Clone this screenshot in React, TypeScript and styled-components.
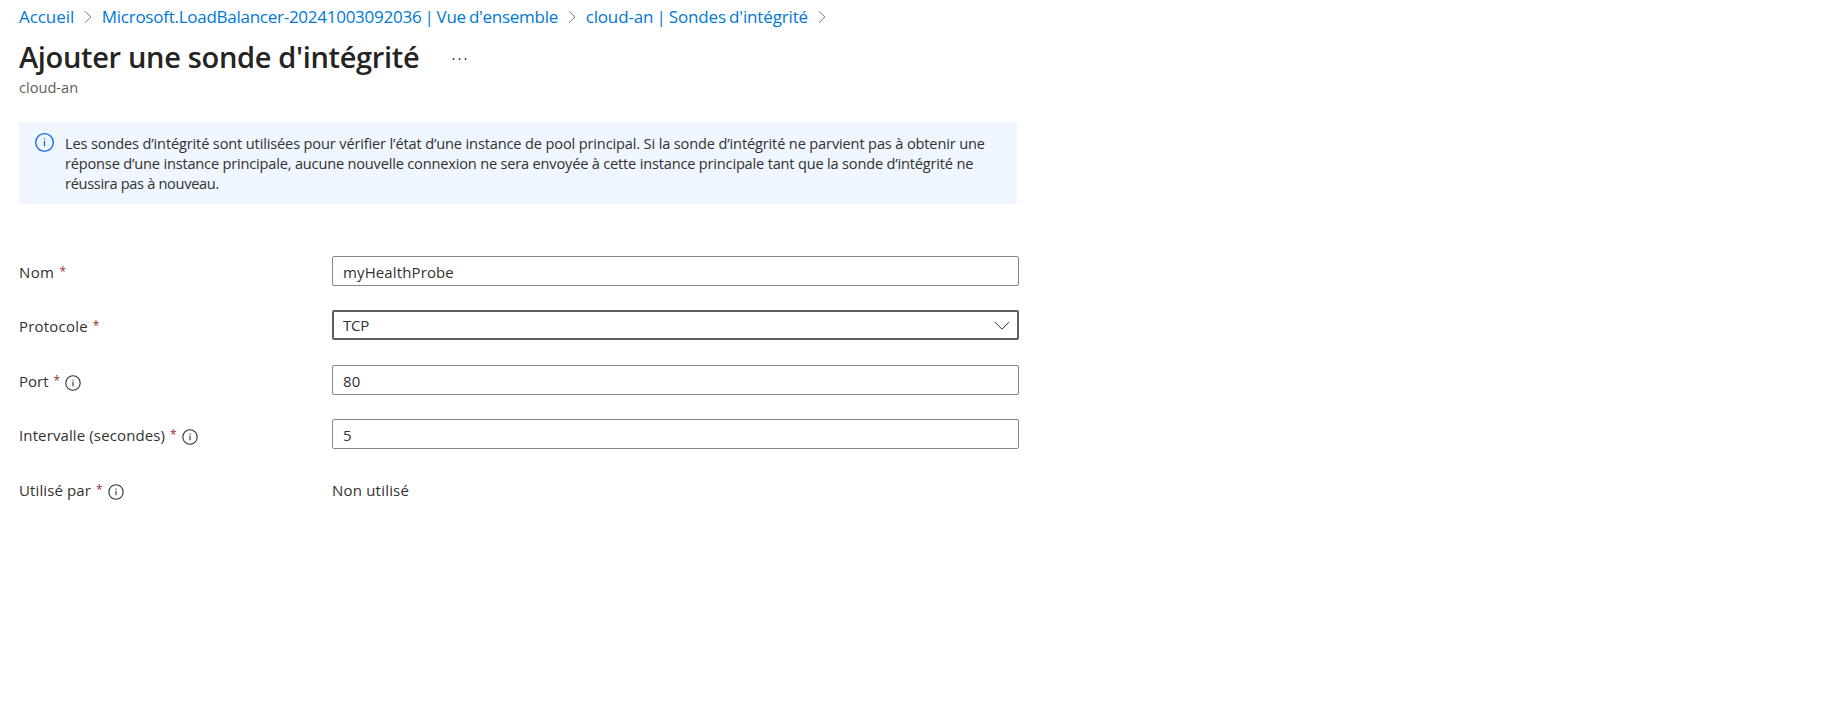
import React from "react";
import styled, { createGlobalStyle } from "styled-components";

const GlobalStyle = createGlobalStyle`
  *, *::before, *::after { box-sizing: border-box; }
  body {
    margin: 0;
    background: #fff;
    color: #323130;
    font-family: "Segoe UI", "Open Sans", "Noto Sans", sans-serif;
  }
`;

const Page = styled.main`
  min-height: 705px;
  padding: 4px 19px 0;
`;

const Breadcrumb = styled.nav`
  display: flex;
  align-items: center;
  height: 26px;
`;

const Crumb = styled.a<{ $spacing: number }>`
  align-self: flex-start;
  color: #0078d4;
  font-size: 17px;
  line-height: 25px;
  letter-spacing: ${(p) => p.$spacing}px;
  word-spacing: -1.1px;
  text-decoration: none;
  white-space: nowrap;
`;

const Separator = styled.svg`
  flex: none;
  width: 8px;
  height: 14px;
  margin: 0 9.8px;
  fill: none;
  stroke: #7a7876;
`;

const TitleRow = styled.header`
  display: flex;
  align-items: center;
  height: 42px;
  margin-top: 6px;
`;

const Title = styled.h1`
  margin: 0;
  color: #252423;
  font-size: 29px;
  font-weight: 600;
  line-height: 42px;
  letter-spacing: -0.33px;
  white-space: nowrap;
`;

const More = styled.svg`
  width: 16px;
  height: 4px;
  margin: 4px 0 0 33px;
  fill: #323130;
`;

const Subtitle = styled.p`
  margin: -1px 0 0;
  color: #605e5c;
  font-size: 14.6px;
  line-height: 20px;
`;

const Notice = styled.section`
  display: flex;
  width: 998px;
  height: 82px;
  margin-top: 25px;
  padding: 11px 16px;
  background: #eff6ff;
`;

const NoticeText = styled.p`
  margin: 0 0 0 11px;
  font-size: 14.6px;
  line-height: 20px;
`;

const NoticeLine = styled.span<{ $spacing: number }>`
  display: block;
  letter-spacing: ${(p) => p.$spacing}px;
  white-space: nowrap;
`;

const Form = styled.form`
  display: grid;
  grid-template-columns: 313px 687px;
  grid-template-rows: 54px 55px 54px 55px 30px;
  margin-top: 52px;
`;

const Label = styled.label`
  display: flex;
  height: 32px;
  align-items: center;
  font-size: 15px;
  line-height: 32px;
  white-space: nowrap;
`;

const LabelText = styled.span<{ $spacing: number }>`
  letter-spacing: ${(p) => p.$spacing}px;
`;

const Required = styled.span`
  margin: 0 0 0 5px;
  color: #a4262c;
  font-size: 12px;
`;

const Input = styled.input`
  width: 100%;
  height: 30px;
  padding: 1px 10px 0;
  border: 1px solid #8a8886;
  border-radius: 2px;
  outline: none;
  color: #323130;
  font: 15px "Segoe UI", "Open Sans", "Noto Sans", sans-serif;
  letter-spacing: 0.12px;
`;

const Select = styled.div`
  display: flex;
  align-items: center;
  justify-content: space-between;
  height: 30px;
  padding: 0 7px 0 9px;
  border: 2px solid #605e5c;
  border-radius: 2px;
  font-size: 15px;
  letter-spacing: -0.2px;
`;

const Chevron = styled.svg`
  width: 16px;
  height: 10px;
  margin-top: 2px;
  fill: none;
  stroke: #323130;
`;

const Value = styled.output`
  height: 32px;
  font-size: 15px;
  line-height: 32px;
  letter-spacing: 0.2px;
`;

const Info = styled.svg<{ $size: number; $color: string }>`
  flex: none;
  width: ${(p) => p.$size}px;
  height: ${(p) => p.$size}px;
  color: ${(p) => p.$color};
  fill: none;
  stroke: currentColor;
`;

const HintSlot = styled.span`
  display: flex;
  margin: 3px 0 0 5px;
`;

function Next() {
  return (
    <Separator viewBox="0 0 8 14">
      <path d="M1 1.2 6.8 7 1 12.8" />
    </Separator>
  );
}

function Hint() {
  return (
    <HintSlot>
      <Info $size={16} $color="#323130" viewBox="0 0 16 16">
        <circle cx="8" cy="8" r="7.2" strokeWidth="1.1" />
        <path d="M8 6.8v4.4M8 4.6v1.2" strokeWidth="1.1" />
      </Info>
    </HintSlot>
  );
}

function FieldLabel({ text, spacing = 0, hint = false }: { text: string; spacing?: number; hint?: boolean }) {
  return (
    <Label>
      <LabelText $spacing={spacing}>{text}</LabelText>
      <Required>*</Required>
      {hint && <Hint />}
    </Label>
  );
}

export default function App() {
  return (
    <Page>
      <GlobalStyle />
      <Breadcrumb>
        <Crumb $spacing={-0.06}>Accueil</Crumb>
        <Next />
        <Crumb $spacing={-0.26}>Microsoft.LoadBalancer-20241003092036 | Vue d'ensemble</Crumb>
        <Next />
        <Crumb $spacing={-0.15}>cloud-an | Sondes d'intégrité</Crumb>
        <Next />
      </Breadcrumb>
      <TitleRow>
        <Title>Ajouter une sonde d'intégrité</Title>
        <More viewBox="0 0 16 4">
          <circle cx="1.5" cy="2" r="0.9" />
          <circle cx="7.5" cy="2" r="0.9" />
          <circle cx="13.5" cy="2" r="0.9" />
        </More>
      </TitleRow>
      <Subtitle>cloud-an</Subtitle>
      <Notice>
        <Info $size={19} $color="#1267e3" viewBox="0 0 19 19">
          <circle cx="9.5" cy="9.5" r="8.8" strokeWidth="1.3" />
          <path d="M9.5 8v5.2M9.5 5.2v1.4" strokeWidth="1.3" />
        </Info>
        <NoticeText>
          <NoticeLine $spacing={-0.15}>
            Les sondes d’intégrité sont utilisées pour vérifier l’état d’une instance de pool principal. Si la sonde d’intégrité ne parvient pas à obtenir une
          </NoticeLine>
          <NoticeLine $spacing={-0.19}>
            réponse d’une instance principale, aucune nouvelle connexion ne sera envoyée à cette instance principale tant que la sonde d’intégrité ne
          </NoticeLine>
          <NoticeLine $spacing={-0.32}>réussira pas à nouveau.</NoticeLine>
        </NoticeText>
      </Notice>
      <Form>
        <FieldLabel text="Nom" spacing={0.4} />
        <Input defaultValue="myHealthProbe" />
        <FieldLabel text="Protocole" spacing={0.2} />
        <Select>
          TCP
          <Chevron viewBox="0 0 16 10">
            <path d="M1 1.2 8 8.2 15 1.2" />
          </Chevron>
        </Select>
        <FieldLabel text="Port" hint />
        <Input defaultValue="80" />
        <FieldLabel text="Intervalle (secondes)" spacing={0.12} hint />
        <Input defaultValue="5" />
        <FieldLabel text="Utilisé par" spacing={0.12} hint />
        <Value>Non utilisé</Value>
      </Form>
    </Page>
  );
}
